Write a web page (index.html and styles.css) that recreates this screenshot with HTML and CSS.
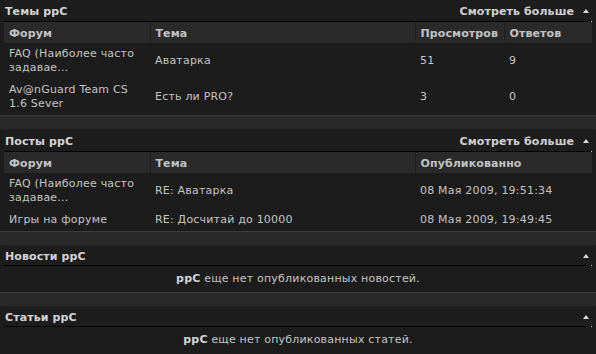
FILE: index.html
```html
<!DOCTYPE html>
<html lang="ru">

<head>
    <meta charset="UTF-8">
    <title>ppC</title>
    <link rel="stylesheet" href="styles.css">
</head>

<body>
    <div class="block">
        <div class="block-head">
            <span class="title">Темы ppC</span>
            <a class="more" href="#">Смотреть больше <span class="arrow"></span></a>
        </div>
        <table class="grid">
            <colgroup>
                <col class="c-forum">
                <col class="c-topic">
                <col class="c-views">
                <col>
            </colgroup>
            <thead>
                <tr>
                    <th>Форум</th>
                    <th>Тема</th>
                    <th>Просмотров</th>
                    <th>Ответов</th>
                </tr>
            </thead>
            <tbody>
                <tr>
                    <td>FAQ (Наиболее часто задавае...</td>
                    <td>Аватарка</td>
                    <td>51</td>
                    <td>9</td>
                </tr>
                <tr>
                    <td>Av@nGuard Team CS 1.6 Sever</td>
                    <td>Есть ли PRO?</td>
                    <td>3</td>
                    <td>0</td>
                </tr>
            </tbody>
        </table>
    </div>
    <div class="spacer"></div>

    <div class="block">
        <div class="block-head">
            <span class="title">Посты ppC</span>
            <a class="more" href="#">Смотреть больше <span class="arrow"></span></a>
        </div>
        <table class="grid">
            <colgroup>
                <col class="c-forum">
                <col class="c-topic">
                <col>
            </colgroup>
            <thead>
                <tr>
                    <th>Форум</th>
                    <th>Тема</th>
                    <th>Опубликованно</th>
                </tr>
            </thead>
            <tbody>
                <tr>
                    <td>FAQ (Наиболее часто задавае...</td>
                    <td>RE: Аватарка</td>
                    <td>08 Мая 2009, 19:51:34</td>
                </tr>
                <tr>
                    <td>Игры на форуме</td>
                    <td>RE: Досчитай до 10000</td>
                    <td>08 Мая 2009, 19:49:45</td>
                </tr>
            </tbody>
        </table>
    </div>
    <div class="spacer"></div>

    <div class="block">
        <div class="block-head plain">
            <span class="title">Новости ppC</span>
            <span class="arrow"></span>
        </div>
        <p class="empty"><b>ppC</b> еще нет опубликованных новостей.</p>
    </div>
    <div class="spacer"></div>

    <div class="block">
        <div class="block-head plain">
            <span class="title">Статьи ppC</span>
            <span class="arrow"></span>
        </div>
        <p class="empty"><b>ppC</b> еще нет опубликованных статей.</p>
    </div>
</body>

</html>
```

FILE: styles.css
```css
body {
    margin: 0;
    background-color: #1c1c1c;
    color: #c4c4c4;
    font-family: "DejaVu Sans", Verdana, sans-serif;
    font-size: 11px;
    line-height: 14px;
    letter-spacing: 0.2px;
}

.block {
    padding: 0 4px;
}

.block-head {
    position: relative;
    display: flex;
    align-items: center;
    justify-content: space-between;
    height: 19px;
    padding: 2px 3px 0 1px;
    border-bottom: 1px solid #000;
    background-color: #1d1d1d;
}

/* little light corner at the end of the rule */
.block-head::after {
    content: "";
    position: absolute;
    right: 0;
    bottom: -1px;
    width: 1px;
    height: 1px;
    background-color: #cfcfcf;
}

.block-head.plain {
    height: 16px;
    padding-top: 3px;
}

.block-head.plain .arrow {
    margin-bottom: 3px;
}

.title {
    font-weight: bold;
    letter-spacing: 0.1px;
    color: #d4d4d4;
}

.more {
    display: flex;
    align-items: center;
    gap: 9px;
    font-weight: bold;
    letter-spacing: 0.1px;
    color: #d0d0d0;
    text-decoration: none;
}

.arrow {
    width: 0;
    height: 0;
    border-left: 3px solid transparent;
    border-right: 3px solid transparent;
    border-bottom: 4px solid #d8d8d8;
    margin-bottom: 2px;
}

.grid {
    width: 100%;
    border-collapse: collapse;
    table-layout: fixed;
}

.c-forum {
    width: 146px;
}

.c-topic {
    width: 265px;
}

.c-views {
    width: 89px;
}

.grid th {
    height: 19px;
    padding: 2px 5px 0;
    text-align: left;
    font-weight: bold;
    letter-spacing: 0.1px;
    color: #c2c2c2;
    background-color: #2a2a2a;
}

.grid th + th {
    border-left: 1px solid #1e1e1e;
}

.grid td {
    padding: 4px 5px;
    vertical-align: middle;
}

.empty {
    margin: 0;
    height: 26px;
    line-height: 26px;
    text-align: center;
}

.empty b {
    color: #d4d4d4;
}

.spacer {
    height: 13px;
    background-color: #292929;
    border-top: 1px solid #3b3b3b;
    border-bottom: 1px solid #202020;
}
```
